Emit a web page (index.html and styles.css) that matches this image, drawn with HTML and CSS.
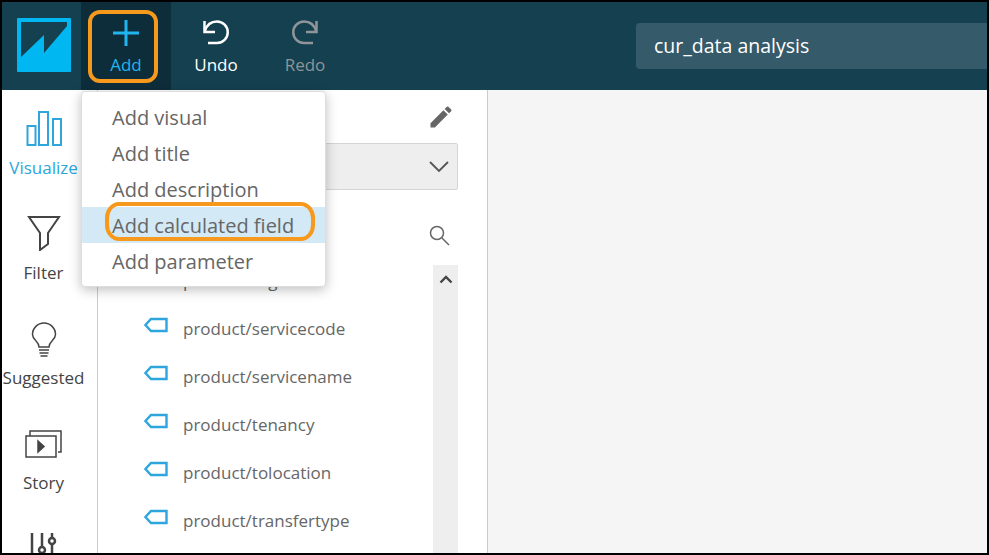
FILE: index.html
```html
<!DOCTYPE html>
<html lang="en">
<head>
  <meta charset="UTF-8" />
  <meta name="viewport" content="width=device-width, initial-scale=1.0"/>
  <title>cur_data analysis</title>
  <link rel="stylesheet" href="styles.css">
</head>
<body>
  <div class="frame">
    <header class="topbar">
      <div class="logo">
        <svg width="54" height="54" viewBox="0 0 54 54">
          <rect width="54" height="54" rx="1" fill="#00b7f1"/>
          <path d="M4 4H50V8L27 35V17L4 39Z" fill="#14404f"/>
        </svg>
      </div>
      <button class="tool tool-add">
        <svg width="30" height="30" viewBox="0 0 30 30"><path d="M15 2V28M2 15H28" stroke="#1fb5ee" stroke-width="3" fill="none"/></svg>
        <span>Add</span>
      </button>
      <button class="tool tool-undo">
        <svg width="30" height="30" viewBox="0 0 30 30" fill="none" stroke="#fff" stroke-width="2.500"><path d="M3.500 3V14H14"/><path d="M4 13C6 6 11 3.500 16 3.500A10.750 10.750 0 0 1 16 25H7"/></svg>
        <span>Undo</span>
      </button>
      <button class="tool tool-redo">
        <svg width="30" height="30" viewBox="0 0 30 30" fill="none" stroke="#8f9598" stroke-width="2.500"><path d="M26.500 3V14H16"/><path d="M26 13C24 6 19 3.500 14 3.500A10.750 10.750 0 0 0 14 25H23"/></svg>
        <span>Redo</span>
      </button>
      <div class="title-box">cur_data analysis</div>
    </header>

    <div class="main">
      <nav class="rail">
        <div class="rail-item active">
          <svg width="36" height="36" viewBox="0 0 36 36" fill="none" stroke="#2ea6dd" stroke-width="2"><rect x="1.500" y="16" width="8" height="19"/><rect x="13" y="2" width="9" height="33"/><rect x="27" y="9" width="8" height="26"/></svg>
          <span>Visualize</span>
        </div>
        <div class="rail-item">
          <svg width="34" height="36" viewBox="0 0 34 36" fill="none" stroke="#444" stroke-width="2"><path d="M2 2H32L21 18V29L13 35V18Z"/></svg>
          <span>Filter</span>
        </div>
        <div class="rail-item rail-bulb">
          <svg width="26" height="36" viewBox="0 0 26 36" fill="none" stroke="#444" stroke-width="1.500"><path d="M8 25C8 19 1.500 18 1.500 12.500A11.500 11.500 0 0 1 24.500 12.500C24.500 18 18 19 18 25ZM8 28H18M8.500 31H17.500M9.500 34H16.500"/></svg>
          <span>Suggested</span>
        </div>
        <div class="rail-item">
          <svg width="38" height="31" viewBox="0 0 38 31" fill="none" stroke="#444" stroke-width="1.500"><path d="M5 6V1H36V22H33"/><rect x="1" y="6" width="30" height="21"/><path d="M13 11L19 16.500L13 22Z" fill="#444"/></svg>
          <span>Story</span>
        </div>
        <div class="rail-item">
          <svg width="28" height="22" viewBox="0 0 28 22" fill="none" stroke="#444" stroke-width="2.500"><path d="M2 0V22M12 0V14M12 20V22M22 0V5M22 11V22"/><circle cx="12" cy="17" r="3"/><circle cx="22" cy="8" r="3"/></svg>
        </div>
      </nav>

      <section class="panel">
        <div class="panel-head">
          <svg width="28" height="28" viewBox="0 0 24 24"><path d="M3 17.250V21h3.750L17.810 9.940l-3.750-3.750L3 17.250zM20.710 7.040a1 1 0 0 0 0-1.410l-2.340-2.340a1 1 0 0 0-1.410 0l-1.830 1.830 3.750 3.750 1.830-1.830z" fill="#666"/></svg>
        </div>
        <div class="select-box">
          <svg width="20" height="12" viewBox="0 0 20 12"><path d="M1 1L10 10L19 1" stroke="#555" stroke-width="1.800" fill="none"/></svg>
        </div>
        <div class="search-row">
          <svg width="22" height="22" viewBox="0 0 22 22" fill="none" stroke="#666" stroke-width="1.500"><circle cx="9" cy="9" r="6.500"/><path d="M14 14L21 21"/></svg>
        </div>
        <div class="field-area">
          <ul class="field-list">
            <li><svg class="tag" width="24" height="16" viewBox="0 0 24 16"><path d="M7 2H22.500V14H7L1.500 8Z"/></svg>product/region</li>
            <li><svg class="tag" width="24" height="16" viewBox="0 0 24 16"><path d="M7 2H22.500V14H7L1.500 8Z"/></svg>product/servicecode</li>
            <li><svg class="tag" width="24" height="16" viewBox="0 0 24 16"><path d="M7 2H22.500V14H7L1.500 8Z"/></svg>product/servicename</li>
            <li><svg class="tag" width="24" height="16" viewBox="0 0 24 16"><path d="M7 2H22.500V14H7L1.500 8Z"/></svg>product/tenancy</li>
            <li><svg class="tag" width="24" height="16" viewBox="0 0 24 16"><path d="M7 2H22.500V14H7L1.500 8Z"/></svg>product/tolocation</li>
            <li><svg class="tag" width="24" height="16" viewBox="0 0 24 16"><path d="M7 2H22.500V14H7L1.500 8Z"/></svg>product/transfertype</li>
          </ul>
          <div class="scrollbar">
            <svg width="14" height="9" viewBox="0 0 14 9"><path d="M1.500 7.500L7 2L12.500 7.500" stroke="#444" stroke-width="2.400" fill="none"/></svg>
          </div>
        </div>
      </section>

      <div class="canvas"></div>
    </div>

    <ul class="add-menu">
      <li>Add visual</li>
      <li>Add title</li>
      <li>Add description</li>
      <li class="hover">Add calculated field</li>
      <li>Add parameter</li>
    </ul>

    <div class="callout callout-add"></div>
    <div class="callout callout-field"></div>
  </div>
</body>
</html>
```

FILE: styles.css
```css
* { box-sizing: border-box; }
html, body { margin: 0; height: 100%; }
body {
  font-family: 'Open Sans', 'Noto Sans', sans-serif;
  background: #fff;
  overflow: hidden;
}
.frame {
  position: relative;
  width: 989px;
  height: 555px;
  border: 2px solid #000;
  display: flex;
  flex-direction: column;
  overflow: hidden;
}

/* top bar */
.topbar {
  height: 88px;
  flex: none;
  background: #14404f;
  display: flex;
  align-items: stretch;
}
.logo {
  width: 79px;
  padding: 16px 0 0 15px;
}
.logo svg { display: block; }
.tool {
  width: 90px;
  padding: 16px 0 0;
  background: none;
  border: none;
  font-family: inherit;
  font-size: 17px;
  line-height: 22px;
  color: #fff;
  display: flex;
  flex-direction: column;
  align-items: center;
  gap: 6px;
}
.tool svg { display: block; }
.tool-add { background: #0e2d3a; color: #1fb5ee; }
.tool-redo { width: 88px; color: #8f9598; }
.title-box {
  flex: 1;
  margin: 21px 0 21px 287px;
  padding-left: 18px;
  background: #355a69;
  border-radius: 4px 0 0 4px;
  color: #fff;
  font-size: 19.500px;
  line-height: 45px;
}

/* body */
.main {
  flex: 1;
  display: flex;
  min-height: 0;
}
.rail {
  width: 96px;
  flex: none;
  border-right: 1px solid #ccc;
  display: flex;
  flex-direction: column;
  overflow: hidden;
}
.rail-item {
  height: 105px;
  flex: none;
  display: flex;
  flex-direction: column;
  align-items: center;
  justify-content: flex-end;
  gap: 11px;
  padding-right: 12px;
  font-size: 17px;
  line-height: 22px;
  color: #444;
  white-space: nowrap;
}
.rail-item:first-child { height: 89px; }
.rail-item.active { color: #2ea6dd; }
.rail-item svg { display: block; flex: none; }
.rail-bulb svg { margin-bottom: -2px; }
.rail-item:last-child { height: 61px; padding-top: 39px; justify-content: flex-start; }

.panel {
  width: 390px;
  flex: none;
  border-right: 1px solid #ccc;
  padding-right: 29px;
  display: flex;
  flex-direction: column;
  align-items: flex-end;
  overflow: hidden;
}
.panel-head {
  height: 53px;
  flex: none;
  padding: 13px 3px 0 0;
}
.panel-head svg { display: block; }
.select-box {
  width: 100%;
  height: 47px;
  flex: none;
  background: #eee;
  border: 1px solid #d5d5d5;
  border-radius: 2px;
  display: flex;
  align-items: center;
  justify-content: flex-end;
  padding-right: 8px;
}
.search-row {
  height: 75px;
  flex: none;
  padding: 34px 8px 0 0;
}
.search-row svg { display: block; }
.field-area {
  flex: 1;
  width: 100%;
  display: flex;
  min-height: 0;
}
.field-list {
  flex: 1;
  margin: -9px 0 0;
  padding: 0;
  list-style: none;
}
.field-list li {
  height: 48px;
  display: flex;
  align-items: center;
  gap: 15px;
  padding-left: 46px;
  font-size: 17px;
  color: #666;
}
.tag { fill: none; stroke: #2ea6dd; stroke-width: 2.400; flex: none; margin-top: -6px; }
.scrollbar {
  width: 25px;
  flex: none;
  background: #eee;
  display: flex;
  justify-content: center;
  padding-top: 10px;
}
.scrollbar svg { display: block; }
.canvas { flex: 1; background: #f5f5f5; }

/* overlays */
.add-menu {
  position: absolute;
  left: 79px;
  top: 89px;
  width: 245px;
  height: 196px;
  margin: 0;
  padding: 7px 0 0;
  list-style: none;
  background: #fff;
  border: 1px solid #ddd;
  border-radius: 4px;
  box-shadow: 0 3px 12px rgba(0,0,0,.25);
}
.add-menu li {
  height: 36px;
  padding-left: 30px;
  font-size: 20px;
  line-height: 38px;
  color: #666;
}
.add-menu li.hover { background: #d3e9f6; }
.callout {
  position: absolute;
  border: 4px solid #f7991c;
}
.callout-add {
  left: 86px;
  top: 8px;
  width: 70px;
  height: 73px;
  border-radius: 12px;
}
.callout-field {
  left: 103px;
  top: 200px;
  width: 210px;
  height: 39px;
  border-radius: 14px / 16px;
}
```
